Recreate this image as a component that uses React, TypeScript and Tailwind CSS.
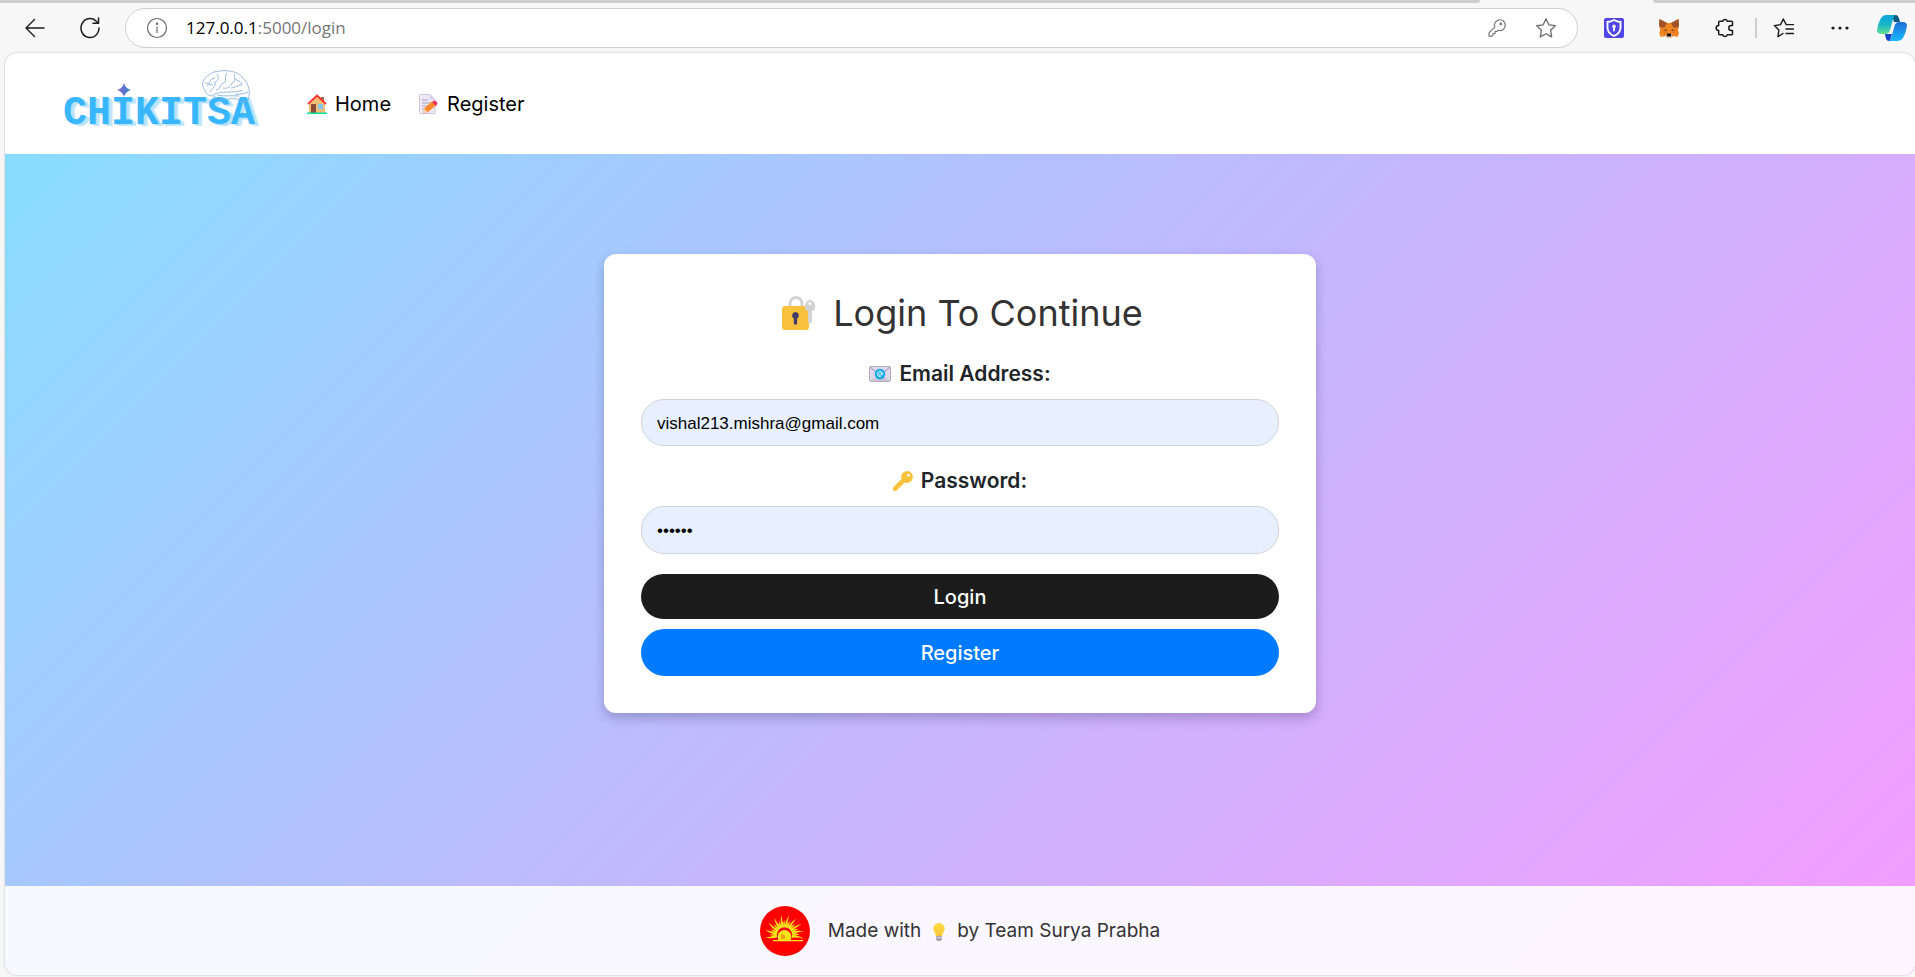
import type { ReactNode } from "react"

const label = "flex items-center justify-center gap-2 text-[21px] font-semibold leading-7 text-[#212529]"
const field =
  "w-full rounded-[23px] border border-[#ced4da] bg-[#e8f0fe] px-[15px] pt-0.5 text-[17px] text-black outline-none font-['Liberation_Sans',Arial,sans-serif]"

function IconButton({ name, children }: { name: string; children: ReactNode }) {
  return (
    <button type="button" aria-label={name} className="flex shrink-0 items-center justify-center">
      {children}
    </button>
  )
}

function BackIcon() {
  return (
    <svg width="22" height="22" viewBox="0 0 22 22" fill="none" stroke="#1b1b1b" strokeWidth="1.4" strokeLinecap="round" strokeLinejoin="round">
      <path d="M20 11H2M10.500 2.500 2 11l8.500 8.500" />
    </svg>
  )
}

function ReloadIcon() {
  return (
    <svg width="22" height="22" viewBox="0 0 22 22" fill="none" stroke="#1b1b1b" strokeWidth="1.5" strokeLinecap="round" strokeLinejoin="round">
      <path d="M20 11a9 9.500 0 1 1-3.200-7.200L19 6" />
      <path d="M19.500 1v5.200H14" />
    </svg>
  )
}

function InfoIcon() {
  return (
    <svg width="22" height="22" viewBox="0 0 22 22" fill="none" stroke="#6b6b6b" strokeWidth="1.2">
      <circle cx="11" cy="11" r="9.500" />
      <path d="M11 9.500v6.500" />
      <circle cx="11" cy="6.700" r=".6" fill="#6b6b6b" />
    </svg>
  )
}

function OutlineKeyIcon() {
  return (
    <svg width="20" height="20" viewBox="0 0 20 20" fill="none" stroke="#767676" strokeWidth="1.2" strokeLinejoin="round">
      <path d="M12.200 1.800a5.400 5.400 0 1 1-1 10.500L9.800 13.500H8v2H6v1.800L5 18.200H2v-3.300l5.800-5.800a5.400 5.400 0 0 1 4.400-7.300Z" />
      <circle cx="13.800" cy="6" r=".8" />
    </svg>
  )
}

function StarIcon() {
  return (
    <svg width="22" height="22" viewBox="0 0 22 22" fill="none" stroke="#6b6b6b" strokeWidth="1.3" strokeLinejoin="round">
      <path d="m11 1.800 2.800 6 6.500.9-4.700 4.600 1.100 6.600L11 16.800l-5.700 3.100 1.100-6.600L1.700 8.700l6.500-.9Z" />
    </svg>
  )
}

function ShieldIcon() {
  return (
    <svg width="20" height="20" viewBox="0 0 20 20">
      <rect width="20" height="20" rx="2" fill="#4f46e5" />
      <path d="M10 2c2 1.300 4 1.900 6.500 2v5.500c0 4-2.500 6.800-6.500 8.500-4-1.700-6.500-4.500-6.500-8.500V4C6 3.900 8 3.300 10 2Z" fill="none" stroke="#fff" strokeWidth="1.900" />
      <path d="M10 6.500a1.900 1.900 0 0 1 .9 3.500v3.200H9.100V10a1.900 1.900 0 0 1 .9-3.500Z" fill="#fff" />
    </svg>
  )
}

function FoxIcon() {
  return (
    <svg width="22" height="20" viewBox="0 0 22 20">
      <path d="M1.500 1 9 5h4l7.500-4 .5 7-1 4 1 3-1.400 4-4.300-1-2 1.500H9L7 18l-4.300 1-1.400-4 1-3-1-4Z" fill="#f08420" />
      <path d="M1.500 1 9 5l-2.500 4.500L2 9.500 1 7ZM20.500 1 13 5l2.500 4.500 4.500 0L21 7Z" fill="#a0522a" />
      <path d="m6.500 11 3 1.200-2.500.8ZM15.500 11l-3 1.200 2.500.8Z" fill="#5a3a28" />
      <path d="M7.500 16h7l-1 3.500h-5Z" fill="#d7c1b3" />
      <path d="M9 15.600h4l.3 2-1 .8H9.700l-1-.8Z" fill="#161616" />
      <path d="m2.500 12 4.500 1.500-1 4.500M19.500 12 15 13.500l1 4.500" fill="none" stroke="#d9691a" strokeWidth=".7" />
    </svg>
  )
}

function PuzzleIcon() {
  return (
    <svg width="20" height="20" viewBox="0 0 20 20" fill="none" stroke="#1b1b1b" strokeWidth="1.500" strokeLinejoin="round">
      <path d="M4.700 3.200h3a2.400 2.400 0 0 1 4.600 0h4.200q1 0 1 1v3.300h-1.200a2.500 2.500 0 0 0 0 5h1.200v3.300q0 1-1 1h-4.200a2.400 2.400 0 0 1-4.600 0h-3q-1 0-1-1v-3.300a2.500 2.500 0 0 1 0-5V4.200q0-1 1-1Z" />
    </svg>
  )
}

function FavouritesIcon() {
  return (
    <svg width="22" height="20" viewBox="0 0 22 20" fill="none" stroke="#1b1b1b" strokeWidth="1.400" strokeLinecap="round" strokeLinejoin="round">
      <path d="M10 15.500 5 18.700l.9-6.600L1.300 7.600l6.200-1L10.300 1l2.900 5.600h7.300M13 11h7.500M13 15.500h7.500" />
    </svg>
  )
}

function CopilotIcon() {
  return (
    <svg width="30" height="28" viewBox="0 0 30 28">
      <defs>
        <linearGradient id="copilot-left" x1="0" y1="0" x2="0" y2="1">
          <stop offset="0" stopColor="#0fa5dd" />
          <stop offset=".5" stopColor="#18b5c9" />
          <stop offset="1" stopColor="#63e08a" />
        </linearGradient>
        <linearGradient id="copilot-right" x1="0" y1="0" x2="0" y2="1">
          <stop offset="0" stopColor="#1f6fd6" />
          <stop offset="1" stopColor="#18b8ff" />
        </linearGradient>
      </defs>
      <path d="M15 1h4q2 0 2.700 2.500L23 8h-6Z" fill="#0b5c7c" />
      <path d="M8 20h7l-2 7h-1q-2.500 0-3.200-3Z" fill="#1741c8" />
      <path d="M9 1h9.500q-1.500.5-2 2.500L13 16q-1 4-4.500 4H4q-4.500 0-3.800-5Q1.500 8 4 4 6 1 9 1Z" fill="url(#copilot-left)" />
      <path d="M21 27h-9.500q2-.5 2.500-2.500L17.500 12q1-4 4.500-4h4q4.500 0 3.800 5Q28.500 20 26 24q-2 3-5 3Z" fill="url(#copilot-right)" />
    </svg>
  )
}

function BrowserBar() {
  return (
    <header className="bg-[#f7f7f7]">
      <div className="flex h-[3px] justify-between">
        <div className="w-[77.3%] rounded-br-lg bg-[#cdcdcd]" />
        <div className="w-[13.7%] rounded-bl-lg bg-[#cdcdcd]" />
      </div>
      <div className="flex h-[50px] items-center pl-6 pr-2">
        <div className="flex gap-[33px] pr-6">
          <IconButton name="Back"><BackIcon /></IconButton>
          <IconButton name="Reload"><ReloadIcon /></IconButton>
        </div>
        <div className="flex h-10 flex-1 items-center rounded-full border border-[#cfcfcf] bg-white px-5">
          <InfoIcon />
          <div className="flex-1 pl-[18px] text-[17px] text-[#767676] font-['Open_Sans',sans-serif]">
            <span className="text-black">127.0.0.1</span>:5000/login
          </div>
          <div className="flex items-center gap-7">
            <IconButton name="Saved passwords"><OutlineKeyIcon /></IconButton>
            <IconButton name="Add to favourites"><StarIcon /></IconButton>
          </div>
        </div>
        <div className="flex items-center pl-[26px]">
          <IconButton name="Shield extension"><ShieldIcon /></IconButton>
          <div className="flex items-center gap-[35px] pl-[34px]">
            <IconButton name="Wallet extension"><FoxIcon /></IconButton>
            <IconButton name="Extensions"><PuzzleIcon /></IconButton>
          </div>
          <div className="ml-5 mr-4 h-5 w-0.5 bg-[#cdcdcd]" />
          <IconButton name="Favourites"><FavouritesIcon /></IconButton>
          <div className="flex items-center gap-7 pl-9">
            <IconButton name="More">
              <svg width="18" height="6" viewBox="0 0 18 6" fill="#1b1b1b">
                <circle cx="2" cy="3" r="1.600" />
                <circle cx="9" cy="3" r="1.600" />
                <circle cx="16" cy="3" r="1.600" />
              </svg>
            </IconButton>
            <IconButton name="Copilot"><CopilotIcon /></IconButton>
          </div>
        </div>
      </div>
    </header>
  )
}

function Logo() {
  return (
    <div className="relative w-[196px] pt-5">
      <svg width="196" height="50" viewBox="0 0 196 50" className="absolute left-0 top-0" aria-hidden="true">
        <defs>
          <linearGradient id="spark" x1="0" y1="0" x2="1" y2="0">
            <stop offset="0" stopColor="#8a63c4" />
            <stop offset="1" stopColor="#2f86d8" />
          </linearGradient>
        </defs>
        <path d="M61 13q1.500 5.500 7 7-5.500 1.500-7 7-1.500-5.500-7-7 5.500-1.500 7-7Z" fill="url(#spark)" />
        <g fill="none" stroke="#7fa9d6" strokeWidth=".8">
          <path d="M142 20c-6-7 0-14 9-18 12-3 24-1 29 6 5 5 7 12 6 18 0 6-4 7-8 5l-7-3c-8 2-17 2-20-2-5 0-9-2-9-6Z" />
          <path d="M144 16c4-4 2-7 8-8M147 22c2-5 6-4 5-10 4-1 4-5 2-8M153 20c5 0 3-6 8-7 3-2 0-6 3-10M160 18c4 1 8-1 9-5 4-1 3-5 2-9M168 18c4 0 6-3 11-3M150 25c8-5 18-1 30-5M172 9c3 2 6 2 7 6M142 13c3 0 5 2 8 2M154 25c8 2 14 0 22 1M172 24c4 1 8 0 13-2" />
        </g>
      </svg>
      <span className="block text-[40px] font-bold leading-[48px] text-[#38b6ff] font-['Liberation_Mono',monospace] [text-shadow:2px_1px_0_#b5e1fb,4px_2px_0_#c3e6fb]">
        CHIKITSA
      </span>
    </div>
  )
}

function HouseIcon() {
  return (
    <svg width="20" height="20" viewBox="0 0 20 20" aria-hidden="true">
      <path d="M14 3h3v6h-3Z" fill="#a56a43" />
      <path d="m10 2 8 8v9H2v-9Z" fill="#f2bd75" />
      <path d="M4 10h5v9H4Z" fill="#8a4b38" />
      <path d="M11 10h5v5h-5Z" fill="#83c8f5" />
      <path d="m1 10 9-8.500L19 10" fill="none" stroke="#f8312f" strokeWidth="1.800" />
      <path d="M0 18.500h20V20H0Z" fill="#00e59b" />
    </svg>
  )
}

function MemoIcon() {
  return (
    <svg width="20" height="20" viewBox="0 0 20 20" aria-hidden="true">
      <path d="M1.500.500h9.500l5 5v14H1.500q-1 0-1-1v-17q0-1 1-1Z" fill="#efe8f7" stroke="#cfc3dd" />
      <path d="M11 .500v5h5" fill="#d8cbe5" />
      <path d="M3 6h6M3 9h10M3 12h7M3 15h4" stroke="#aaa0ba" />
      <path d="m4 19 1.500-5L13 7.500l4 4L9 18Z" fill="#ff8a2b" />
      <path d="m13 8 2-1.500q3 .5 3.500 3L17 12Z" fill="#f92f60" />
      <path d="m4 19 1.300-4.500 3.300 3.500Z" fill="#ffceb0" />
    </svg>
  )
}

function LockIcon() {
  return (
    <svg width="36" height="36" viewBox="0 0 36 36" aria-hidden="true">
      <path d="M9 14V8.500a6 6 0 0 1 12 0V14" fill="none" stroke="#d3d3d3" strokeWidth="3" />
      <path d="M1 14q0-3 3-3h21q3 0 3 3v18q0 3-3 3H4q-3 0-3-3Z" fill="#f9c23c" />
      <path d="M29 5a6 6 0 0 1 2 11.200V27l-2 2-2-2V16.200A6 6 0 0 1 29 5Z" fill="#d3d3d3" />
      <circle cx="29" cy="8.500" r="1.500" fill="#fff" />
      <path d="M14.500 17a3.500 3.500 0 0 1 1.700 6.500V28a1.700 1.700 0 0 1-3.400 0v-4.500a3.500 3.500 0 0 1 1.700-6.500Z" fill="#433b6b" />
    </svg>
  )
}

function MailIcon() {
  return (
    <svg width="22" height="16" viewBox="0 0 22 16" aria-hidden="true">
      <rect x=".5" y=".5" width="21" height="15" rx="1" fill="#e1d8ec" stroke="#b4acbc" />
      <path d="m1 15 8-6h4l8 6" fill="#cdc4d6" />
      <path d="m1 1 7 6M21 1l-7 6" stroke="#998ea4" />
      <circle cx="11" cy="8" r="5.200" fill="#00a6ed" />
      <circle cx="11" cy="8" r="1.500" fill="none" stroke="#fff" strokeWidth=".8" />
      <path d="M12.500 6.500v2q1.500 1 1.500-1a3 3 0 1 0-1.500 3" fill="none" stroke="#fff" strokeWidth=".8" />
    </svg>
  )
}

function KeyIcon() {
  return (
    <svg width="20" height="20" viewBox="0 0 20 20" aria-hidden="true">
      <path d="M14 0a6 6 0 1 1-2.500 11.500L10 13l-.5 1.500-1.500.5-1 1.500-1.500.3-.5 1.700-2 1.500-3-.5v-3L8.500 8A6 6 0 0 1 14 0Z" fill="#f9c23c" />
      <circle cx="15.500" cy="4.300" r="1.400" fill="#fff" />
    </svg>
  )
}

function BulbIcon() {
  return (
    <svg width="12" height="18" viewBox="0 0 12 18" aria-hidden="true">
      <path d="M6 0a5.700 5.700 0 0 1 5.700 5.700c0 3-2.200 4-2.500 7.300H2.800C2.500 9.700.3 8.700.3 5.700A5.700 5.700 0 0 1 6 0Z" fill="#fcd53f" />
      <path d="M3.800 6.500 5 13h2l1.200-6.500" fill="none" stroke="#f9a93c" strokeWidth=".8" />
      <path d="M3 13h6v3.500L7.500 18h-3L3 16.500Z" fill="#a9a5b3" />
      <path d="M3 14.700h6" stroke="#d9d6df" strokeWidth=".8" />
    </svg>
  )
}

const RAYS = Array.from({ length: 19 }, (_, i) => -99 + i * 11)

function SunBadge() {
  return (
    <svg width="50" height="50" viewBox="0 0 50 50" role="img" aria-label="Surya Prabha">
      <circle cx="25" cy="25" r="25" fill="#fe0000" />
      <g fill="#f7e31c">
        {RAYS.map((a, i) => (
          <path
            key={a}
            transform={`rotate(${a} 24.5 29)`}
            d={i % 2 ? "M24 21q-1.500-4 .5-7 0 3 1.200 7Z" : "M23.300 21.500q-1-6 2-12.500-1 6 .8 12.500Z"}
          />
        ))}
        <path d="M18.500 34a6.800 6.800 0 1 1 12 0Z" />
        <path d="M13 34h30v1.300H13Z" />
      </g>
      <path d="M22 28v5M24 29v4" stroke="#fe0000" strokeWidth=".6" />
    </svg>
  )
}

function NavLinks() {
  return (
    <nav className="flex h-[101px] items-center bg-white px-[58px]">
      <a href="/"><Logo /></a>
      <div className="flex items-center gap-7 pl-12 text-xl text-black">
        <a href="/" className="flex items-center gap-2"><HouseIcon />Home</a>
        <a href="/register" className="flex items-center gap-2"><MemoIcon />Register</a>
      </div>
    </nav>
  )
}

function LoginCard() {
  return (
    <form className="w-full max-w-[712px] rounded-xl bg-white p-[37px] pt-9 shadow-[0_5px_12px_rgba(0,0,0,0.22)]">
      <h1 className="flex items-center justify-center gap-4 pl-1 text-4xl leading-[46px] text-[#333]">
        <LockIcon />
        Login To Continue
      </h1>
      <label htmlFor="email" className={`${label} mt-6`}><MailIcon />Email Address:</label>
      <input id="email" type="email" defaultValue="vishal213.mishra@gmail.com" className={`${field} mt-[11px] h-[47px]`} />
      <label htmlFor="password" className={`${label} mt-[21px]`}><KeyIcon />Password:</label>
      <input id="password" type="password" defaultValue="secret" className={`${field} mt-[11px] h-12`} />
      <button type="submit" className="mt-5 h-[45px] w-full rounded-full bg-[#1c1c1c] text-xl font-medium text-white">Login</button>
      <button type="button" className="mt-2.5 h-[47px] w-full rounded-full bg-[#007bff] text-xl font-medium text-white">Register</button>
    </form>
  )
}

export default function App() {
  return (
    <div className="flex min-h-screen flex-col bg-[#f7f7f7] font-['Inter',sans-serif]">
      <BrowserBar />
      <div className="mb-0.5 ml-[5px] flex flex-1 flex-col overflow-hidden rounded-xl bg-[linear-gradient(135deg,#84dfff,#c0b9ff,#f59bff)] shadow-[0_0_2px_rgba(0,0,0,0.3)]">
        <NavLinks />
        <main className="flex flex-1 items-start justify-center pt-[100px]">
          <LoginCard />
        </main>
        <footer className="flex h-[89px] items-center justify-center gap-[18px] bg-white/90 text-[19px] text-[#333]">
          <SunBadge />
          <p className="flex items-center gap-3 pt-0.5">Made with <BulbIcon /> by Team Surya Prabha</p>
        </footer>
      </div>
    </div>
  )
}
